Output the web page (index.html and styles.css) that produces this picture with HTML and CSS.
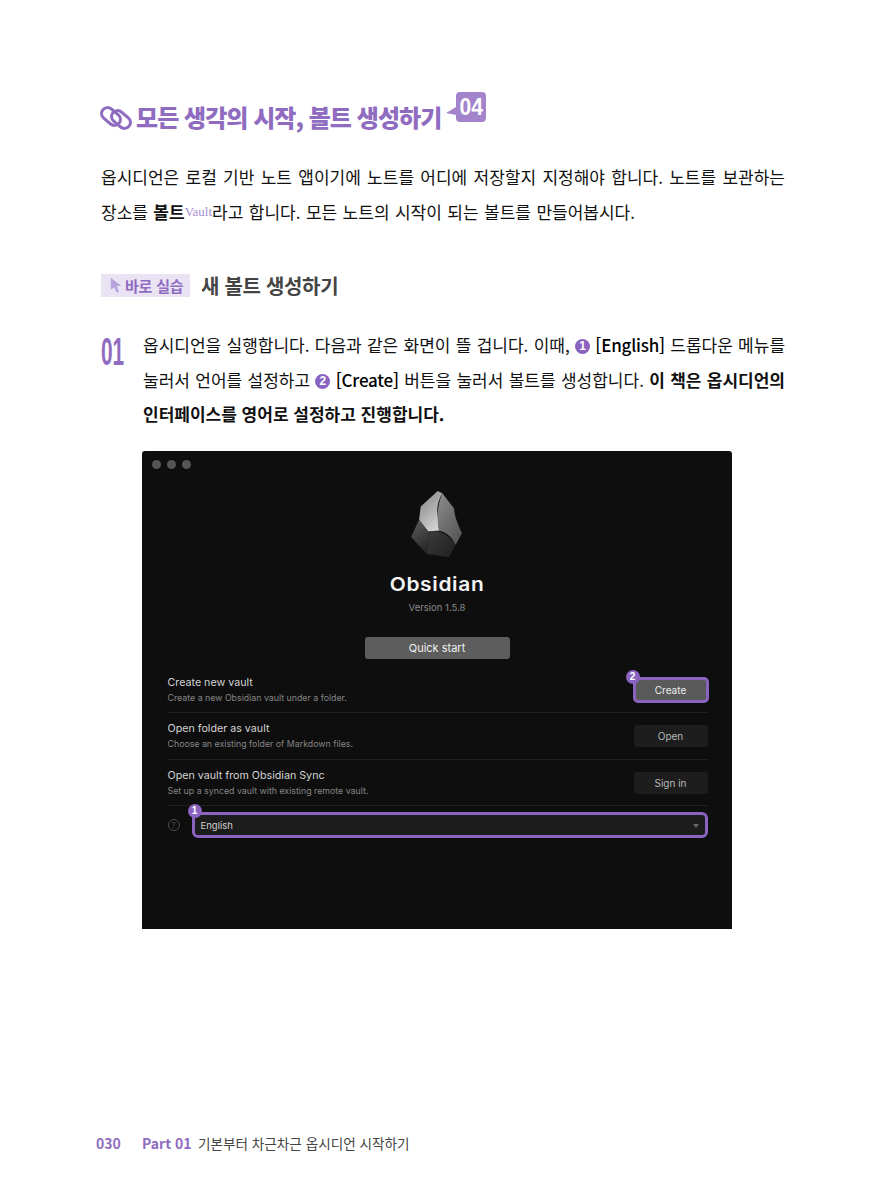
FILE: index.html
```html
<!DOCTYPE html>
<html lang="ko">
<head>
<meta charset="utf-8">
<title>모든 생각의 시작, 볼트 생성하기</title>
<link rel="stylesheet" href="styles.css">
</head>
<body>
<main class="page">
  <header class="title-row">
    <svg class="chain" viewBox="0 0 32 28" aria-hidden="true">
      <rect x="0.5" y="6.5" width="21" height="12" rx="6" transform="rotate(40 11 12.5)"/>
      <rect x="10.5" y="9.5" width="21" height="12" rx="6" transform="rotate(40 21 15.5)"/>
    </svg>
    <h1 class="title">모든 생각의 시작, 볼트 생성하기</h1>
    <span class="section-no"><span class="section-digits">04</span></span>
  </header>

  <p class="intro">
    <span class="line">옵시디언은 로컬 기반 노트 앱이기에 노트를 어디에 저장할지 지정해야 합니다. 노트를 보관하는</span>
    <span class="line last">장소를 <b>볼트</b><span class="gloss">Vault</span>라고 합니다. 모든 노트의 시작이 되는 볼트를 만들어봅시다.</span>
  </p>

  <section class="practice">
    <span class="tag">
      <svg class="cursor" viewBox="0 0 14 18" aria-hidden="true"><path d="M1 0.5 L13 10 L8 10.5 L10.5 17 L7.5 17.5 L5 11.5 L1 14.5 Z"/></svg>
      바로 실습
    </span>
    <h2 class="practice-title">새 볼트 생성하기</h2>
  </section>

  <section class="step">
    <div class="step-no"><span class="step-digits">01</span></div>
    <p class="step-text">
      <span class="line">옵시디언을 실행합니다. 다음과 같은 화면이 뜰 겁니다. 이때, <span class="mark">1</span> <b class="en">[English]</b> 드롭다운 메뉴를</span>
      <span class="line">눌러서 언어를 설정하고 <span class="mark">2</span> <b class="en">[Create]</b> 버튼을 눌러서 볼트를 생성합니다. <b>이 책은 옵시디언의</b></span>
      <span class="line last"><b>인터페이스를 영어로 설정하고 진행합니다.</b></span>
    </p>
  </section>

  <figure class="window">
    <div class="dots"><span></span><span></span><span></span></div>
    <svg class="logo" viewBox="210 120 165 208" aria-hidden="true">
      <defs>
        <linearGradient id="g1" x1="0.2" y1="0.1" x2="0.7" y2="1"><stop offset="0" stop-color="#8d8d8d"/><stop offset="1" stop-color="#d6d6d6"/></linearGradient>
        <linearGradient id="g2" x1="0" y1="0" x2="0.6" y2="1"><stop offset="0" stop-color="#8c8c8c"/><stop offset="1" stop-color="#5a5a5a"/></linearGradient>
        <linearGradient id="g3" x1="0.3" y1="0" x2="0.6" y2="1"><stop offset="0" stop-color="#5a5a5a"/><stop offset="1" stop-color="#262626"/></linearGradient>
        <linearGradient id="g4" x1="0" y1="0" x2="1" y2="1"><stop offset="0" stop-color="#3c3c3c"/><stop offset="1" stop-color="#1f1f1f"/></linearGradient>
      </defs>
      <path fill="url(#g1)" d="M296 123 L310 130 C298 150 292 175 296 195 L300 243 C285 243 272 245 268 246 L240 210 L245 170 Z"/>
      <path fill="url(#g2)" d="M310 130 L345 175 C348 205 358 225 369 250 L350 286 C340 262 320 245 300 243 C296 215 290 180 310 130 Z"/>
      <path fill="url(#g3)" d="M240 210 L268 246 C272 265 268 290 262 312 L216 262 Z"/>
      <path fill="url(#g4)" d="M268 246 C285 240 320 240 350 286 L330 323 L262 312 C268 290 272 265 268 246 Z"/>
    </svg>
    <div class="app-name">Obsidian</div>
    <div class="version">Version 1.5.8</div>
    <div class="quick">Quick start</div>

    <div class="rows">
      <div class="row">
        <div class="row-text"><div class="row-title">Create new vault</div><div class="row-desc">Create a new Obsidian vault under a folder.</div></div>
        <div class="btn btn-hl">Create<span class="pin pin-btn">2</span></div>
      </div>
      <div class="row">
        <div class="row-text"><div class="row-title">Open folder as vault</div><div class="row-desc">Choose an existing folder of Markdown files.</div></div>
        <div class="btn">Open</div>
      </div>
      <div class="row">
        <div class="row-text"><div class="row-title">Open vault from Obsidian Sync</div><div class="row-desc">Set up a synced vault with existing remote vault.</div></div>
        <div class="btn">Sign in</div>
      </div>
      <div class="lang-row">
        <span class="help">?</span>
        <div class="select">English<span class="caret"></span><span class="pin pin-sel">1</span></div>
      </div>
    </div>
  </figure>

  <footer class="foot">
    <span class="folio">030</span>
    <span class="part">Part 01</span>
    <span class="chapter">기본부터 차근차근 옵시디언 시작하기</span>
  </footer>
</main>
</body>
</html>
```
FILE: styles.css
```css
* { box-sizing: border-box; }
html, body { margin: 0; background: #fff; }
.page {
  width: 890px;
  height: 1186px;
  padding: 92px 105px 0 101px;
  display: flex;
  flex-direction: column;
  font-family: "Noto Sans CJK KR", "Noto Sans", sans-serif;
  color: #111;
  position: relative;
}
.title-row { display: flex; align-items: flex-start; height: 40px; }
.chain { width: 32px; height: 28px; margin: 12px 0 0 -1px; fill: none; stroke: #8f6cc0; stroke-width: 3; }
.title {
  margin: 8px 0 0 4px;
  font-size: 24px;
  line-height: 34px;
  font-weight: 900;
  color: #8f6cc0;
  letter-spacing: -0.95px;
  white-space: nowrap;
}
.section-no {
  position: relative;
  margin-left: 15px;
  width: 30px;
  height: 30px;
  background: #a283cc;
  border-radius: 4px;
  color: #fff;
  font: 700 24px/30px "Liberation Sans", sans-serif;
  text-align: center;
}
.section-digits { display: inline-block; transform: scaleX(0.88); }
.section-no::before {
  content: "";
  position: absolute;
  left: -10px;
  top: 15px;
  border-style: solid;
  border-width: 6px 10px 2px 0;
  border-color: transparent #a283cc transparent transparent;
}
.intro { margin: 27px 0 0; font-size: 17px; line-height: 35px; }
.line { display: block; white-space: nowrap; text-align: justify; text-align-last: justify; }
.line.last { text-align-last: left; }
.intro .line.last { text-align-last: justify; width: 534px; }
.gloss { font: 400 13px "Liberation Serif", serif; color: #a78fd0; vertical-align: 3px; }
.practice { display: flex; align-items: center; margin-top: 40px; height: 32px; }
.tag {
  display: flex;
  align-items: center;
  width: 89px;
  height: 23px;
  padding-left: 9px;
  background: #e9e3f4;
  color: #8f6cc0;
  font-size: 15px;
  font-weight: 700;
  letter-spacing: -0.2px;
  white-space: nowrap;
}
.cursor { width: 12px; height: 16px; margin-right: 3px; fill: #b9a3dc; }
.practice-title { margin: 2px 0 0 11px; font-size: 20px; font-weight: 700; color: #444; letter-spacing: -0.3px; line-height: 32px; }
.step { display: flex; margin-top: 27px; }
.step-no {
  width: 42px;
  flex: none;
  color: #8f6cc0;
  font: 700 38px/40px "Liberation Sans", sans-serif;
  padding-top: 4px;
}
.step-digits { display: inline-block; transform: scaleX(0.55); transform-origin: left center; }
.step-text { margin: 0; font-size: 17px; line-height: 34.5px; flex: 1; }
.mark {
  display: inline-block;
  width: 15px;
  height: 15px;
  border-radius: 50%;
  background: #8a63c0;
  color: #fff;
  font: 700 12px/15px "Liberation Sans", sans-serif;
  text-align: center;
  text-align-last: center;
  vertical-align: 2px;
}
.en { letter-spacing: -0.2px; font-weight: 500; color: #000; }
.window {
  margin: 19px 0 0 41px;
  width: 590px;
  height: 478px;
  background: #0e0e0e;
  border-radius: 3px 3px 0 0;
  display: flex;
  flex-direction: column;
  align-items: center;
  font-family: Inter, "Liberation Sans", sans-serif;
  color: #ddd;
}
.dots { align-self: flex-start; display: flex; gap: 6px; padding: 9px 0 0 10px; height: 39px; }
.dots span { width: 9px; height: 9px; border-radius: 50%; background: #555; }
.logo { width: 55px; height: 69px; margin-left: -1px; }
.app-name { margin-top: 12px; font: 600 19px/28px Inter, sans-serif; color: #f4f4f4; letter-spacing: 0.6px; transform: scaleX(1.1); }
.version { margin-top: 2px; font-size: 9.5px; line-height: 14px; color: #8a8a8a; }
.quick {
  margin-top: 22px;
  width: 145px;
  height: 22px;
  border-radius: 3px;
  background: #5d5d5d;
  color: #f0f0f0;
  font-size: 11px;
  font-weight: 400;
  line-height: 22px;
  text-align: center;
}
.rows { width: 540px; margin-top: 8px; margin-left: 1px; }
.row {
  display: flex;
  justify-content: space-between;
  align-items: center;
  height: 46.5px;
  padding-top: 1px;
  border-bottom: 1px solid #202020;
}
.row-title { font-size: 10.7px; line-height: 15px; color: #d4d4d4; }
.row-desc { font-size: 8.8px; line-height: 15px; color: #858585; }
.btn {
  position: relative;
  width: 74px;
  height: 22px;
  background: #1d1d1d;
  border-radius: 3px;
  color: #b8b8b8;
  font-size: 10px;
  line-height: 22px;
  text-align: center;
}
.btn-hl {
  background: #5a5a5a;
  color: #eee;
  height: 26px;
  line-height: 20px;
  width: 76px;
  border: 3px solid #8a63c0;
  border-radius: 5px;
  margin-right: -1px;
}
.lang-row { display: flex; align-items: center; gap: 12px; margin-top: 6px; }
.help {
  width: 12px;
  height: 12px;
  border: 1px solid #4c4c4c;
  border-radius: 50%;
  color: #4c4c4c;
  font-size: 8px;
  line-height: 10px;
  text-align: center;
  flex: none;
}
.select {
  position: relative;
  flex: 1;
  height: 26px;
  background: #1c1c1c;
  border: 3px solid #8a63c0;
  border-radius: 6px;
  padding-left: 6px;
  color: #d0d0d0;
  font-size: 9.5px;
  line-height: 22px;
}
.caret {
  position: absolute;
  right: 6px;
  top: 9px;
  border-style: solid;
  border-width: 4px 3px 0;
  border-color: #666 transparent transparent;
}
.pin {
  position: absolute;
  width: 14px;
  height: 14px;
  border-radius: 50%;
  background: #8a63c0;
  color: #fff;
  font: 700 10px/14px "Liberation Sans", sans-serif;
  text-align: center;
}
.pin-btn { left: -10px; top: -10px; }
.pin-sel { left: -7px; top: -11px; }
.foot {
  position: absolute;
  left: 96px;
  top: 1132px;
  display: flex;
  align-items: center;
  height: 22px;
  font-size: 14px;
  white-space: nowrap;
}
.folio { width: 46px; font-weight: 700; color: #8f6cc0; }
.part { width: 56px; font-weight: 700; color: #8f6cc0; }
.chapter { font-size: 13.6px; color: #444; }
```
